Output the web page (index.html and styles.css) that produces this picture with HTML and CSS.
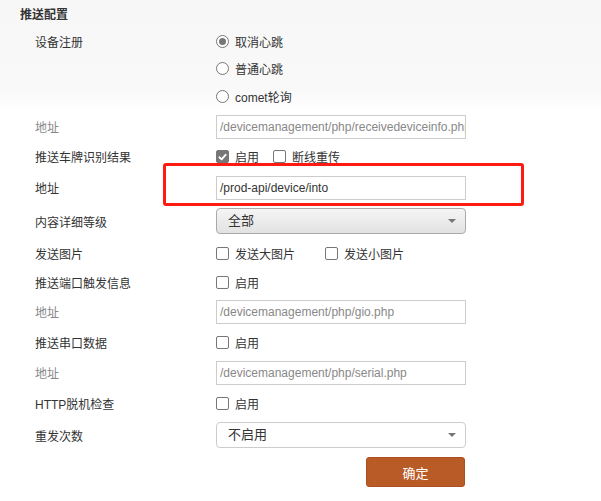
FILE: index.html
```html
<!DOCTYPE html>
<html lang="zh">
<head>
<meta charset="utf-8">
<title>推送配置</title>
<link rel="stylesheet" href="styles.css">
</head>
<body>
<div class="panel">
  <div class="title">推送配置</div>
  <div class="form">
    <div class="row h27"><div class="label">设备注册</div><div class="ctl"><span class="radio on"></span>取消心跳</div></div>
    <div class="row h27"><div class="label"></div><div class="ctl"><span class="radio"></span>普通心跳</div></div>
    <div class="row h29"><div class="label"></div><div class="ctl"><span class="radio"></span>comet轮询</div></div>
    <div class="row h31"><div class="label muted">地址</div><div class="ctl"><div class="field muted">/devicemanagement/php/receivedeviceinfo.php</div></div></div>
    <div class="row h29"><div class="label">推送车牌识别结果</div><div class="ctl"><span class="check on"><svg viewBox="0 0 12 12" width="12" height="12"><path d="M2.6 6.3 L5 8.6 L9.4 3.6" stroke="#fff" stroke-width="2" fill="none" stroke-linecap="round" stroke-linejoin="round"/></svg></span>启用<span class="check gap14"></span>断线重传</div></div>
    <div class="row h33"><div class="label">地址</div><div class="ctl"><div class="field">/prod-api/device/into</div></div></div>
    <div class="row h34"><div class="label">内容详细等级</div><div class="ctl"><div class="select grad">全部<span class="caret"></span></div></div></div>
    <div class="row h30"><div class="label">发送图片</div><div class="ctl"><span class="check"></span>发送大图片<span class="check gap30"></span>发送小图片</div></div>
    <div class="row h28"><div class="label">推送端口触发信息</div><div class="ctl"><span class="check"></span>启用</div></div>
    <div class="row h31"><div class="label muted">地址</div><div class="ctl"><div class="field muted">/devicemanagement/php/gio.php</div></div></div>
    <div class="row h30"><div class="label">推送串口数据</div><div class="ctl"><span class="check"></span>启用</div></div>
    <div class="row h31"><div class="label muted">地址</div><div class="ctl"><div class="field muted">/devicemanagement/php/serial.php</div></div></div>
    <div class="row h31"><div class="label">HTTP脱机检查</div><div class="ctl"><span class="check"></span>启用</div></div>
    <div class="row h32"><div class="label">重发次数</div><div class="ctl"><div class="select plain">不启用<span class="caret"></span></div></div></div>
    <div class="row h42"><div class="label"></div><div class="ctl end"><button class="btn">确定</button></div></div>
  </div>
  <div class="mark"></div>
</div>
</body>
</html>
```
FILE: styles.css
```css
html, body {
  margin: 0;
  padding: 0;
  background: #fff;
}
body {
  font-family: "Liberation Sans", "Noto Sans CJK SC", sans-serif;
  font-size: 12px;
  color: #333;
}
.panel {
  position: relative;
  width: 601px;
  height: 501px;
  background: linear-gradient(#f7f7f7 0, #f9f9f9 92px, #fff 110px) no-repeat 0 0 / 100% 110px;
}
.title {
  height: 26px;
  padding-top: 2px;
  padding-left: 20px;
  line-height: 26px;
  font-weight: bold;
}
.row {
  display: grid;
  grid-template-columns: 181px 250px;
  align-items: center;
  padding-left: 35px;
}
.h27 { height: 27px; }
.h28 { height: 28px; }
.h29 { height: 29px; }
.h30 { height: 30px; }
.h31 { height: 31px; }
.h32 { height: 32px; }
.h33 { height: 33px; }
.h34 { height: 34px; }
.h42 { height: 42px; }
.label { white-space: nowrap; }
.muted { color: #888; }
.ctl {
  display: flex;
  align-items: center;
  white-space: nowrap;
}
.ctl.end { justify-content: flex-end; }
.radio {
  box-sizing: border-box;
  width: 13px;
  height: 13px;
  border: 1px solid #777;
  border-radius: 50%;
  margin-right: 6px;
  background: #fff;
  position: relative;
}
.radio.on::after {
  content: "";
  position: absolute;
  left: 2px;
  top: 2px;
  width: 7px;
  height: 7px;
  border-radius: 50%;
  background: #777;
}
.check {
  box-sizing: border-box;
  width: 13px;
  height: 13px;
  border: 1px solid #777;
  border-radius: 2px;
  margin-right: 6px;
  background: #fff;
  display: flex;
  align-items: center;
  justify-content: center;
}
.check.on {
  background: #777;
  border-color: #777;
}
.check svg { display: block; }
.gap14 { margin-left: 14px; }
.gap30 { margin-left: 30px; }
.field {
  box-sizing: border-box;
  width: 250px;
  height: 24px;
  border: 1px solid #ccc;
  padding: 0 3px;
  line-height: 22px;
  overflow: hidden;
  white-space: nowrap;
  background: #fff;
}
.select {
  position: relative;
  box-sizing: border-box;
  width: 250px;
  height: 26px;
  border-radius: 4px;
  padding-left: 11px;
  line-height: 24px;
  font-size: 13px;
  color: #333;
}
.select.grad {
  border: 1px solid #aaa;
  background: linear-gradient(#f5f5f5, #e2e2e2);
}
.select.plain {
  border: 1px solid #ccc;
  background: #fff;
}
.caret {
  position: absolute;
  right: 9px;
  top: 10px;
  width: 0;
  height: 0;
  border-left: 4px solid transparent;
  border-right: 4px solid transparent;
  border-top: 4px solid #777;
}
.btn {
  width: 99px;
  height: 30px;
  margin-right: 1px;
  border: 1px solid #a94f20;
  border-radius: 3px;
  background: #b95b27;
  color: #fff;
  font-family: "Liberation Sans", "Noto Sans CJK SC", sans-serif;
  font-size: 13px;
  padding: 0;
}
.mark {
  position: absolute;
  left: 163px;
  top: 163px;
  width: 361px;
  height: 43px;
  box-sizing: border-box;
  border: 3px solid #ff1a12;
  border-radius: 3px;
}
```
